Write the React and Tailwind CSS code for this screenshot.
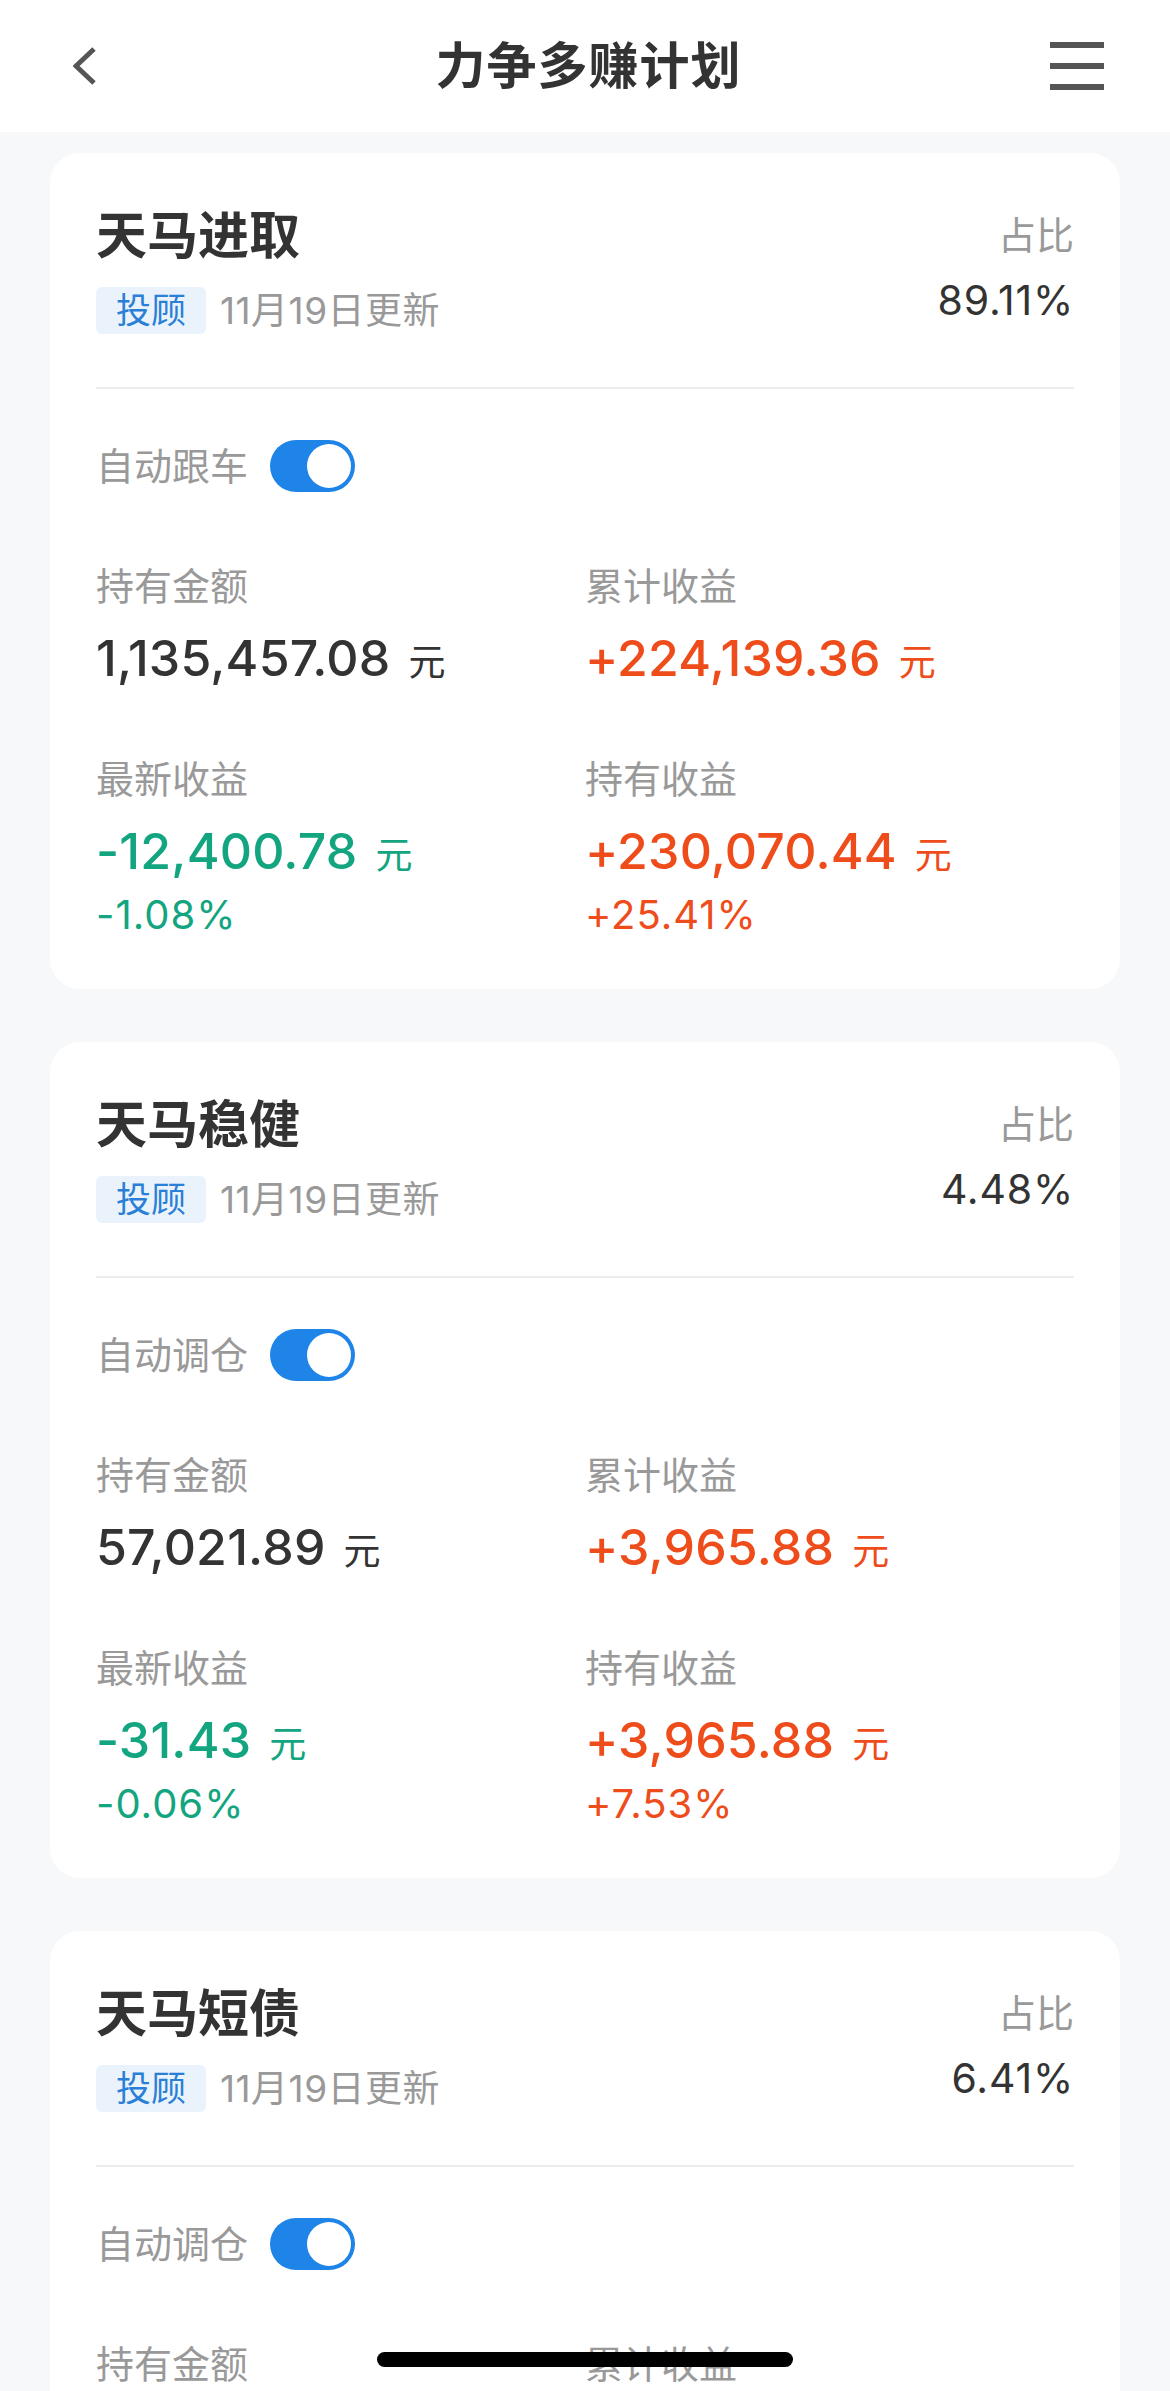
import React from "react";

const GREEN = "text-[#13a57f]";
const RED = "text-[#ef4c1b]";
const DARK = "text-[#333333]";

const PLANS = [
  {
    name: "天马进取",
    ratio: "89.11%",
    auto: "自动跟车",
    hold: { v: "1,135,457.08", c: DARK },
    total: { v: "+224,139.36", c: RED },
    latest: { v: "-12,400.78", p: "-1.08%", c: GREEN },
    profit: { v: "+230,070.44", p: "+25.41%", c: RED },
  },
  {
    name: "天马稳健",
    ratio: "4.48%",
    auto: "自动调仓",
    hold: { v: "57,021.89", c: DARK },
    total: { v: "+3,965.88", c: RED },
    latest: { v: "-31.43", p: "-0.06%", c: GREEN },
    profit: { v: "+3,965.88", p: "+7.53%", c: RED },
  },
  {
    name: "天马短债",
    ratio: "6.41%",
    auto: "自动调仓",
    hold: { v: "--", c: DARK },
    total: { v: "--", c: RED },
    latest: { v: "--", p: "--", c: GREEN },
    profit: { v: "--", p: "--", c: RED },
  },
];

function Toggle() {
  return (
    <div className="w-[85px] h-[52px] rounded-full bg-[#1f84e8] flex items-center justify-end pr-[4px]">
      <div className="w-[44px] h-[44px] rounded-full bg-white" />
    </div>
  );
}

function Stat({ label, item }) {
  return (
    <div className="flex flex-col">
      <div className="h-[48px] leading-[48px] text-[38px] text-[#999999]">{label}</div>
      <div className={`mt-[18px] h-[60px] flex items-baseline gap-[18px] ${item.c}`}>
        <span className="text-[50px] leading-[60px] font-medium tracking-[0.2px]">{item.v}</span>
        <span className="text-[37px] leading-[60px]">元</span>
      </div>
      {item.p && (
        <div className={`mt-[10px] h-[48px] leading-[48px] text-[40px] tracking-[1px] ${item.c}`}>{item.p}</div>
      )}
    </div>
  );
}

function PlanCard({ plan }) {
  return (
    <div className="bg-white rounded-[30px] px-[46px] pt-[53px] pb-[50px]">
      <div className="flex justify-between">
        <div className="flex flex-col">
          <div className={`h-[60px] leading-[60px] text-[51px] font-semibold ${DARK}`}>{plan.name}</div>
          <div className="mt-[21px] flex items-center gap-[14px]">
            <span className="h-[47px] px-[20px] rounded-[6px] bg-[#eaf3fc] text-[#2a7fd6] text-[35px] leading-[47px]">投顾</span>
            <span className="text-[37px] leading-[47px] tracking-[0.5px] text-[#999999]">11月19日更新</span>
          </div>
        </div>
        <div className="flex flex-col items-end pt-[5px]">
          <div className="h-[48px] leading-[48px] text-[38px] text-[#999999]">占比</div>
          <div className={`mt-[17px] h-[48px] leading-[48px] text-[41px] tracking-[0.8px] ${DARK}`}>{plan.ratio}</div>
        </div>
      </div>

      <div className="mt-[53px] h-[2px] bg-[#ececec]" />

      <div className="mt-[51px] flex items-center gap-[22px]">
        <span className="text-[38px] leading-[52px] text-[#999999]">{plan.auto}</span>
        <Toggle />
      </div>

      <div className="mt-[70px] grid grid-cols-2 gap-y-[67px]">
        <Stat label="持有金额" item={plan.hold} />
        <Stat label="累计收益" item={plan.total} />
        <Stat label="最新收益" item={plan.latest} />
        <Stat label="持有收益" item={plan.profit} />
      </div>
    </div>
  );
}

export default function App() {
  return (
    <div className="relative h-[2391px] overflow-hidden bg-[#f6f8fa] font-['Inter','Noto_Sans_CJK_SC',sans-serif]">
      <header className="h-[132px] bg-white grid grid-cols-[1fr_auto_1fr] items-center px-[66px] pl-[73px]">
        <svg width="24" height="40" viewBox="0 0 24 40" className="justify-self-start">
          <polyline points="21,3 3,20 21,37" fill="none" stroke="#555555" strokeWidth="5" />
        </svg>
        <h1 className={`text-[50px] font-semibold tracking-[1px] ${DARK}`}>力争多赚计划</h1>
        <div className="justify-self-end flex flex-col gap-[15px]">
          <div className="w-[54px] h-[6px] bg-[#555555]" />
          <div className="w-[54px] h-[6px] bg-[#555555]" />
          <div className="w-[54px] h-[6px] bg-[#555555]" />
        </div>
      </header>

      <main className="px-[50px] pt-[21px] flex flex-col gap-[53px]">
        {PLANS.map((p) => (
          <PlanCard key={p.name} plan={p} />
        ))}
      </main>

      <div className="absolute left-1/2 -translate-x-1/2 bottom-[24px] w-[416px] h-[15px] rounded-full bg-black" />
    </div>
  );
}
